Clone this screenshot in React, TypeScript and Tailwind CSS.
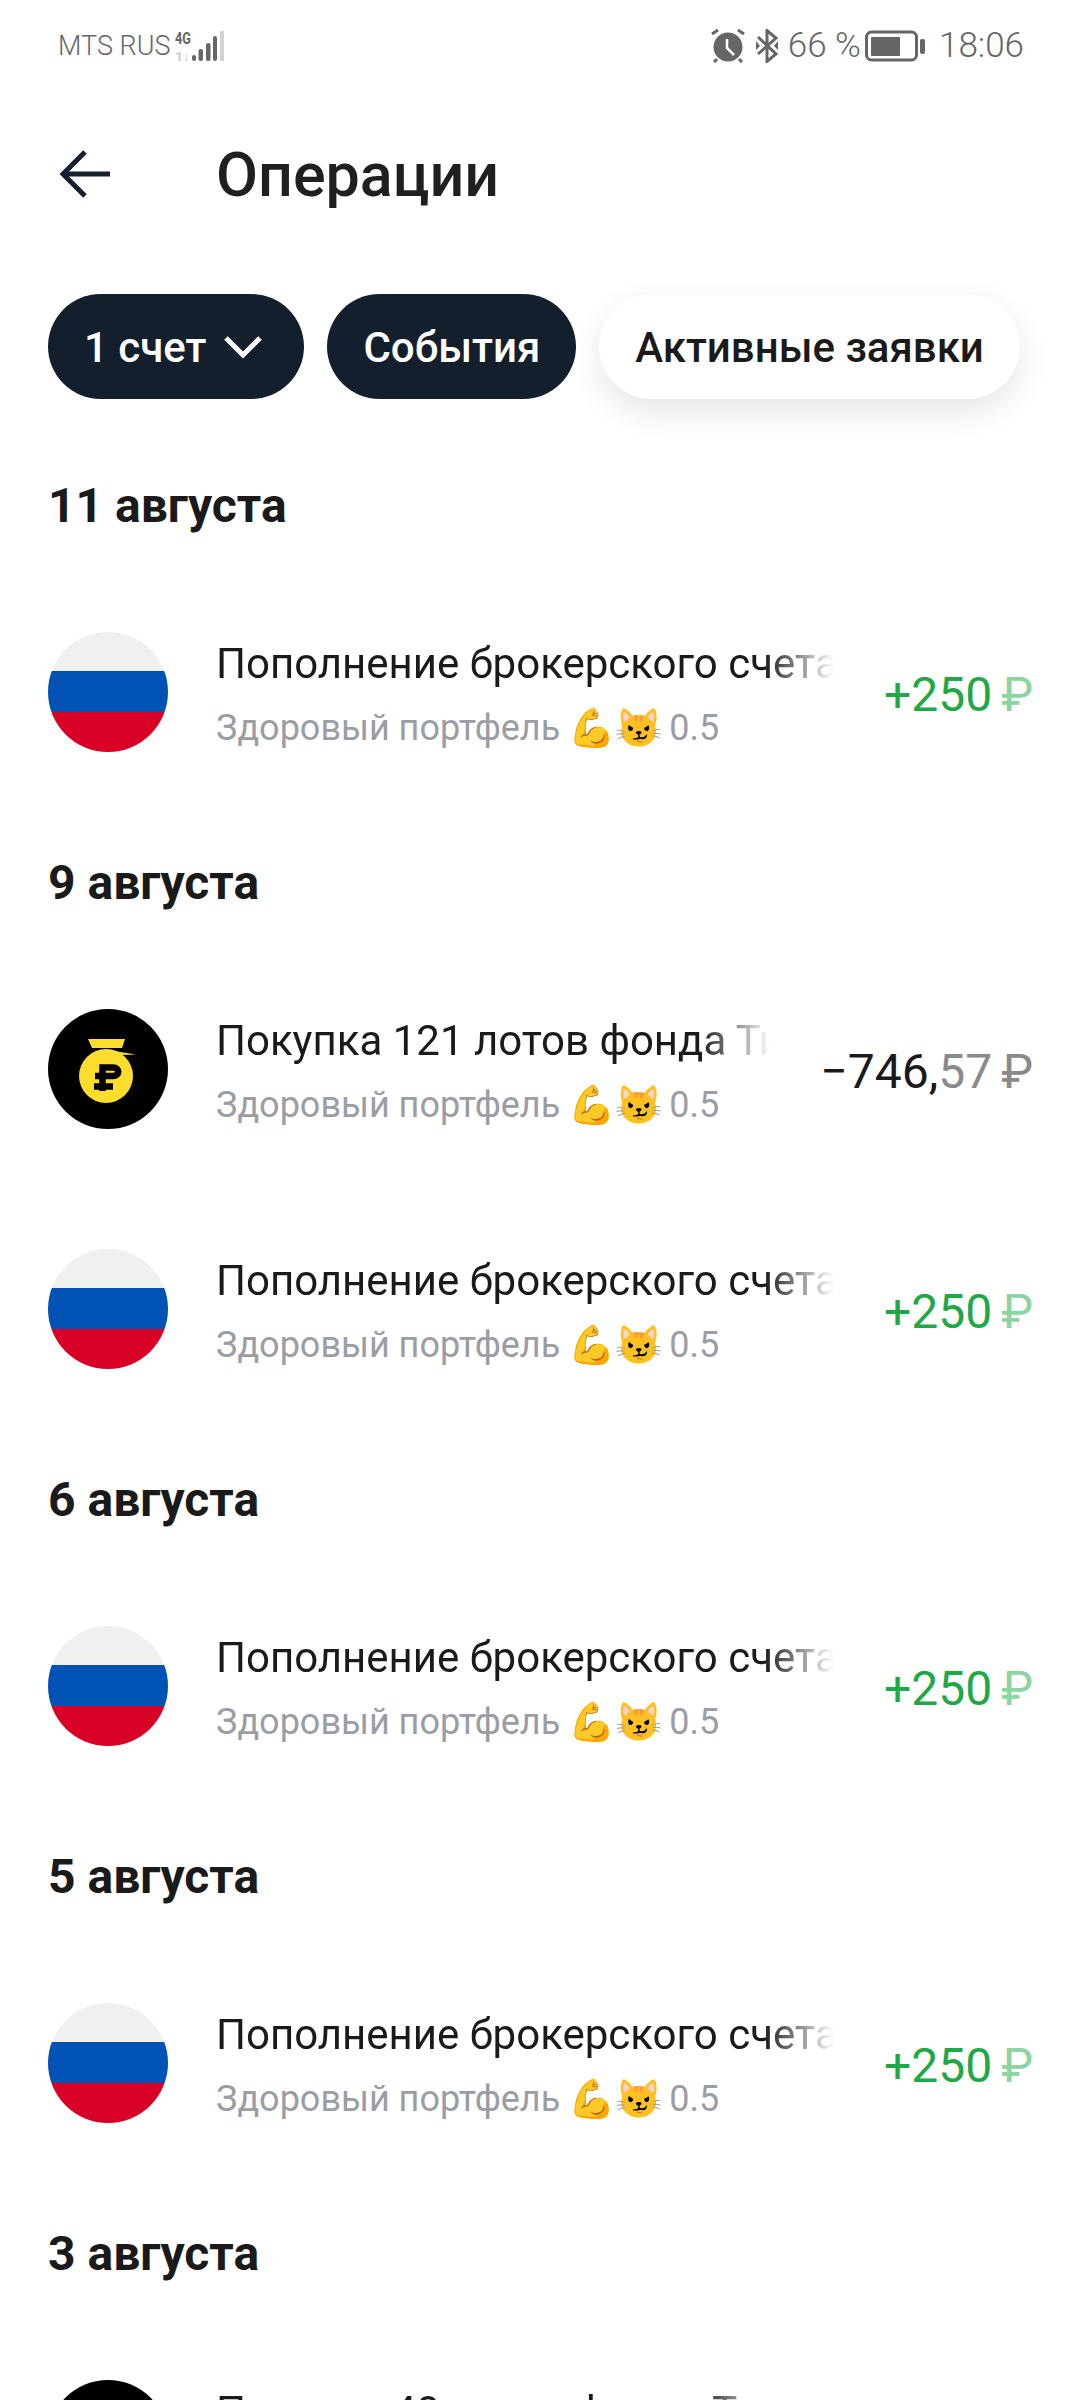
const ROBOTO = "font-['Roboto',sans-serif]";

function Flag() {
  return (
    <svg width="120" height="120" viewBox="0 0 120 120" className="shrink-0">
      <defs><clipPath id="flagc"><circle cx="60" cy="60" r="60" /></clipPath></defs>
      <g clipPath="url(#flagc)">
        <rect width="120" height="39" fill="#f0f0f0" />
        <rect y="39" width="120" height="41" fill="#0052b4" />
        <rect y="80" width="120" height="40" fill="#d80027" />
      </g>
    </svg>
  );
}

function Bag() {
  return (
    <svg width="120" height="120" viewBox="0 0 120 120" className="shrink-0">
      <circle cx="60" cy="60" r="60" fill="#000" />
      <circle cx="58" cy="67" r="27" fill="#ffdd2d" />
      <path d="M40 30H77L74 39H44Z" fill="#ffdd2d" />
      <path d="M66 42L88 45.5L72 46Z" fill="#ffdd2d" />
      <path d="M54.5 82V58.5H65C72 58.5 72 67 65 67H47M46 77.5H65" fill="none" stroke="#000" strokeWidth="6.5" />
    </svg>
  );
}

function Row({ kind, title, amount, cents }: { kind: "flag" | "bag"; title: string; amount: string; cents?: string }) {
  const green = !cents;
  return (
    <div className="flex h-[240px] items-center pl-[48px] pr-[47px] pt-[2px]">
      {kind === "flag" ? <Flag /> : <Bag />}
      <div className="ml-[48px] min-w-0 flex-1 pt-[5px]">
        <div className="overflow-hidden whitespace-nowrap text-[42px] leading-[48px] text-[#1a1a1a] [mask-image:linear-gradient(to_right,#000_calc(100%-70px),transparent)]">
          {title}
        </div>
        <div className="mt-[18px] flex h-[44px] items-center whitespace-nowrap text-[36px] leading-[44px] text-[#9a9da4]">
          <span>Здоровый портфель</span>
          <span className="ml-[8px] text-[38px]">💪😼</span>
          <span className="ml-[7px]">0.5</span>
        </div>
      </div>
      <div className={`ml-[50px] shrink-0 pt-[5px] text-[48px] leading-[52px] ${green ? "text-[#1fa846]" : "text-[#1a1a1a]"}`}>
        {amount}
        {cents ? <span className="text-[#8a8a8a]">{cents}</span> : null}
        <span className={`ml-[9px] ${green ? "text-[#8ad5a2]" : "text-[#8a8a8a]"}`}>₽</span>
      </div>
    </div>
  );
}

function Day({ label }: { label: string }) {
  return (
    <div className="pl-[48px] pt-[48px] pb-[41px] text-[48px] font-bold leading-[48px] text-[#1a1a1a]">{label}</div>
  );
}

export default function App() {
  const dep = "Пополнение брокерского счета";
  return (
    <div className={`h-[2400px] w-[1080px] overflow-hidden bg-white ${ROBOTO}`}>
      <div className="flex h-[92px] items-center justify-between pl-[58px] pr-[56px] text-[#666]">
        <div className="flex items-center">
          <span className="text-[27px] font-light">MTS RUS</span>
          <svg width="50" height="30" viewBox="0 0 50 30" className="ml-[5px]">
            <text x="0" y="13" fontSize="17" fontWeight="700" fill="#666" fontFamily="Roboto" textLength="16" lengthAdjust="spacingAndGlyphs">4G</text>
            <text x="0" y="30" fontSize="13" fontWeight="700" fill="#ccc" fontFamily="Roboto" textLength="15" lengthAdjust="spacingAndGlyphs">1↓</text>
            <rect x="17" y="24" width="4" height="6" rx="2" fill="#666" />
            <rect x="23.5" y="18" width="4.5" height="12" rx="2" fill="#666" />
            <rect x="31" y="12" width="4.5" height="18" rx="2" fill="#666" />
            <rect x="38" y="5" width="4" height="25" rx="2" fill="#666" />
            <rect x="45" y="0" width="4" height="30" rx="1" fill="#d2d2d2" />
          </svg>
        </div>
        <div className="flex items-center text-[35px] font-light">
          <svg width="34" height="34" viewBox="0 0 34 34">
            <circle cx="17" cy="18" r="14.5" fill="#666" />
            <path d="M16 10V19L23 26" fill="none" stroke="#fff" strokeWidth="2.5" />
            <path d="M1 5L7 1M33 5L27 1M6 30L3 33M28 30L31 33" stroke="#666" strokeWidth="3" />
          </svg>
          <svg width="24" height="34" viewBox="0 0 24 34" className="ml-[10px]">
            <path d="M3 25L21 9L12 1.5V32.5L21 25L3 8" fill="none" stroke="#666" strokeWidth="3" />
            <path d="M1 12L5 17L1 21ZM23 12L19 17L23 21Z" fill="#666" />
          </svg>
          <span className="ml-[9px]">66 %</span>
          <svg width="60" height="32" viewBox="0 0 60 32" className="ml-[4px]">
            <rect x="1.5" y="2" width="50" height="28" rx="5" fill="none" stroke="#666" strokeWidth="3" />
            <rect x="6" y="7" width="29" height="19" rx="1" fill="#666" />
            <rect x="55" y="9" width="5" height="15" rx="2" fill="#666" />
          </svg>
          <span className="ml-[14px]">18:06</span>
        </div>
      </div>

      <div className="flex h-[164px] items-center pl-[60px]">
        <svg width="50" height="48" viewBox="0 0 50 48" className="shrink-0">
          <path d="M50 24H4M25 2L3 24L25 46" fill="none" stroke="#14202e" strokeWidth="5" />
        </svg>
        <div className="ml-[106px] pt-[2px] text-[61px] font-medium leading-[64px] text-[#1f1f1f]">Операции</div>
      </div>

      <div className="mt-[38px] flex gap-[23px] pl-[48px] text-[42px] font-medium leading-[48px]">
        <div className="flex h-[105px] items-center gap-[17px] rounded-full bg-[#141f2d] pl-[36px] pr-[41px] text-white">
          <span className="pt-[2px]">1 счет</span>
          <svg width="40" height="24" viewBox="0 0 40 24"><path d="M3 3L20 20L37 3" fill="none" stroke="#fff" strokeWidth="5" /></svg>
        </div>
        <div className="flex h-[105px] items-center rounded-full bg-[#141f2d] px-[36px] pt-[2px] text-white">События</div>
        <div className="flex h-[105px] items-center rounded-full bg-white px-[36px] pt-[2px] text-[#1a1a1a] shadow-[0_12px_32px_rgba(0,0,0,0.10)]">Активные заявки</div>
      </div>
      <div className="h-[35px]" />

      <Day label="11 августа" />
      <Row kind="flag" title={dep} amount="+250" />
      <Day label="9 августа" />
      <Row kind="bag" title="Покупка 121 лотов фонда Тинькофф" amount="−746," cents="57" />
      <Row kind="flag" title={dep} amount="+250" />
      <Day label="6 августа" />
      <Row kind="flag" title={dep} amount="+250" />
      <Day label="5 августа" />
      <Row kind="flag" title={dep} amount="+250" />
      <Day label="3 августа" />
      <Row kind="bag" title="Покупка 40 лотов фонда Тинькофф" amount="−246," cents="80" />
    </div>
  );
}
